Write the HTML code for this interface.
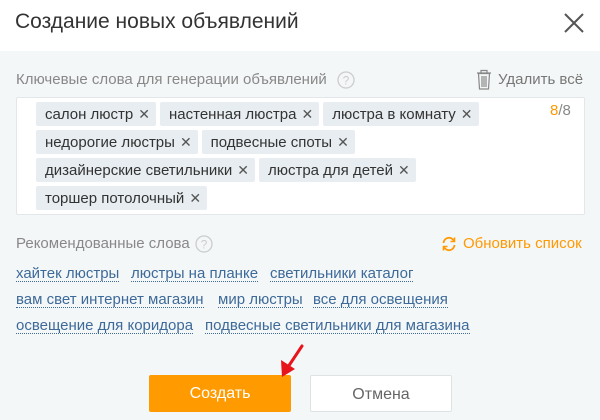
<!DOCTYPE html>
<html><head><meta charset="utf-8"><style>
*{margin:0;padding:0;box-sizing:border-box}
body{width:600px;height:420px;overflow:hidden;background:#f4f7f8;font-family:"Liberation Sans","DejaVu Sans",sans-serif;position:relative}
.hdr{position:absolute;left:0;top:0;width:600px;height:51px;background:#fff}
.title{position:absolute;left:15px;top:10px;font-size:21px;color:#333}
.abs{position:absolute}
.lbl{font-size:15px;color:#888}
.box{position:absolute;left:16px;top:97px;width:569px;height:118px;background:#fff;border:1px solid #e3e7ea;border-radius:2px}
.tags{position:absolute;left:36px;top:102px;width:520px;display:flex;flex-wrap:wrap;column-gap:4px;row-gap:4px}
.tag{height:24px;line-height:24px;background:#e7edf0;border-radius:2px;font-size:15px;color:#333;padding:0 6px 0 9px;white-space:nowrap}
.tag span{color:#555;font-size:14px;margin-left:5px}
.lnk{position:absolute;font-size:15px;color:#3d6a99;border-bottom:1px dotted #3d6a99;line-height:15px;white-space:nowrap}
.btn{position:absolute;top:375px;width:142px;height:37px;line-height:37px;text-align:center;font-size:16px;border-radius:2px}
</style></head><body>
<div class="hdr"></div>
<div class="title">Создание новых объявлений</div>
<svg class="abs" style="left:563px;top:12px" width="22" height="22" viewBox="0 0 22 22"><path d="M2 2L20 20M20 2L2 20" stroke="#555" stroke-width="2"/></svg>

<div class="abs lbl" style="left:16px;top:71px">Ключевые слова для генерации объявлений</div>
<svg class="abs" style="left:337px;top:71px" width="18" height="18"><circle cx="9" cy="9" r="8" fill="none" stroke="#ccc" stroke-width="1.3"/><text x="9" y="13.5" font-size="12" fill="#ccc" text-anchor="middle" font-family="Liberation Sans">?</text></svg>
<svg class="abs" style="left:476px;top:69px" width="16" height="21" viewBox="0 0 16 21"><path d="M1 4H15M5 4V1.5H11V4M2.5 4.5L3.5 20H12.5L13.5 4.5Z M6 7V18M8 7V18M10 7V18" fill="none" stroke="#888" stroke-width="1.2"/></svg>
<div class="abs lbl" style="left:498px;top:71px;color:#777">Удалить всё</div>

<div class="box"></div>
<div class="tags">
<div class="tag">салон люстр<span>✕</span></div>
<div class="tag">настенная люстра<span>✕</span></div>
<div class="tag">люстра в комнату<span>✕</span></div>
<div class="tag">недорогие люстры<span>✕</span></div>
<div class="tag">подвесные споты<span>✕</span></div>
<div class="tag">дизайнерские светильники<span>✕</span></div>
<div class="tag">люстра для детей<span>✕</span></div>
<div class="tag">торшер потолочный<span>✕</span></div>
</div>
<div class="abs" style="left:550px;top:102px;font-size:15px;color:#888"><span style="color:#f90">8</span>/8</div>

<div class="abs lbl" style="left:16px;top:235px">Рекомендованные слова</div>
<svg class="abs" style="left:195px;top:235px" width="18" height="18"><circle cx="9" cy="9" r="8" fill="none" stroke="#ccc" stroke-width="1.3"/><text x="9" y="13.5" font-size="12" fill="#ccc" text-anchor="middle" font-family="Liberation Sans">?</text></svg>
<svg class="abs" style="left:441px;top:236px" width="16" height="16" viewBox="0 0 16 16"><path d="M2.5 7A5.5 5.5 0 0 1 13 5M13.5 9A5.5 5.5 0 0 1 3 11" fill="none" stroke="#f90" stroke-width="1.8"/><path d="M13.5 1.5V5.5H9.5M2.5 14.5V10.5H6.5" fill="none" stroke="#f90" stroke-width="1.6"/></svg>
<div class="abs" style="left:463px;top:235px;font-size:15px;color:#f90">Обновить список</div>

<div class="lnk" style="left:16px;top:266px">хайтек люстры</div>
<div class="lnk" style="left:131px;top:266px">люстры на планке</div>
<div class="lnk" style="left:270px;top:266px">светильники каталог</div>
<div class="lnk" style="left:16px;top:292px">вам свет интернет магазин</div>
<div class="lnk" style="left:218px;top:292px">мир люстры</div>
<div class="lnk" style="left:313px;top:292px">все для освещения</div>
<div class="lnk" style="left:16px;top:318px">освещение для коридора</div>
<div class="lnk" style="left:205px;top:318px">подвесные светильники для магазина</div>

<div class="btn" style="left:149px;background:#ff9b00;color:#fff">Создать</div>
<div class="btn" style="left:310px;background:#fff;border:1px solid #dde2e5;color:#666">Отмена</div>
<svg class="abs" style="left:270px;top:335px" width="50" height="50" viewBox="270 335 50 50"><path d="M302 346L288 367" stroke="#e8141c" stroke-width="3" stroke-linecap="round"/><path d="M282 377L281 360L295 369Z" fill="#e8141c"/></svg>
</body></html>
